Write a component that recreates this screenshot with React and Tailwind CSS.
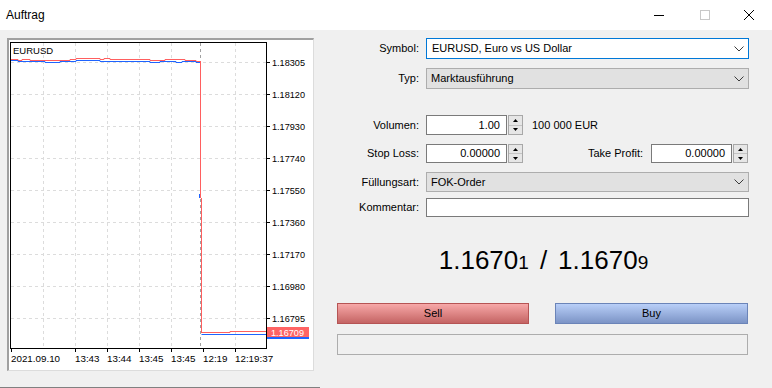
import React from "react";

const F = { fontFamily: '"Liberation Sans", Arial, sans-serif' };

function Chevron() {
  return (
    <svg width="10" height="6" viewBox="0 0 10 6" className="shrink-0">
      <polyline points="0.5,0.5 5,5 9.5,0.5" fill="none" stroke="#3c3c3c" strokeWidth="1" />
    </svg>
  );
}

function Spinner() {
  return (
    <div className="w-[15px] h-full shrink-0 border border-[#a8a8a8] bg-[#e6e6e6] flex flex-col">
      <div className="flex-1 flex items-center justify-center border-b border-[#c4c4c4]">
        <svg width="5" height="3" viewBox="0 0 5 3"><polygon points="0,3 2.5,0 5,3" fill="#000" /></svg>
      </div>
      <div className="flex-1 flex items-center justify-center">
        <svg width="5" height="3" viewBox="0 0 5 3"><polygon points="0,0 2.5,3 5,0" fill="#000" /></svg>
      </div>
    </div>
  );
}

function Chart() {
  const prices = ["1.18305", "1.18120", "1.17930", "1.17740", "1.17550", "1.17360", "1.17170", "1.16980", "1.16795"];
  const ys = [62, 94, 126, 158, 190, 222, 254, 286, 318];
  const vx = [43, 75, 107, 139, 171, 235];
  const times = [[11, "2021.09.10"], [75, "13:43"], [107, "13:44"], [139, "13:45"], [171, "13:45"], [203, "12:19"], [235, "12:19:37"]];
  const red = "11,59.5 18,59.5 18,60.5 22,60.5 22,59.5 30,59.5 30,60.5 70,60.5 70,59.5 76,59.5 76,58.5 100,58.5 100,59.5 104,59.5 104,58.5 110,58.5 110,59.5 150,59.5 150,60.5 165,60.5 165,59.5 185,59.5 185,60.5 196,60.5 196,61.5 200.5,61.5";
  const blue = "11,60.5 18,60.5 18,61.5 45,61.5 45,62.5 60,62.5 60,61.5 76,61.5 76,60.5 100,60.5 100,61.5 150,61.5 150,62.5 160,62.5 160,61.5 176,61.5 176,62.5 182,62.5 182,61.5 196,61.5 196,62.5 200,62.5";
  return (
    <svg width="304" height="330" viewBox="9 40 304 330" style={F}>
      <rect x="9" y="40" width="304" height="330" fill="#fff" />
      {ys.map((y) => (
        <line key={"h" + y} x1="11" x2="266" y1={y + 0.5} y2={y + 0.5} stroke="#dcdcdc" strokeDasharray="3 3" />
      ))}
      {vx.map((x) => (
        <line key={"v" + x} x1={x + 0.5} x2={x + 0.5} y1="43" y2="348" stroke="#dcdcdc" strokeDasharray="3 3" />
      ))}
      <line x1="200.5" x2="200.5" y1="43" y2="348" stroke="#a0a0a0" strokeDasharray="3 3" />
      <polyline points={red} fill="none" stroke="#ff5f5f" strokeWidth="1" />
      <polyline points={blue} fill="none" stroke="#1e64ff" strokeWidth="1" />
      <line x1="200.5" x2="200.5" y1="61" y2="198" stroke="#ff5f5f" />
      <line x1="199.5" x2="199.5" y1="194" y2="198" stroke="#1e64ff" />
      <line x1="201.5" x2="201.5" y1="198" y2="333" stroke="#ff5f5f" />
      <polyline points="201.5,332.5 230,332.5 230,331.5 266,331.5" fill="none" stroke="#ff5f5f" />
      <polyline points="201.5,334.5 266,334.5" fill="none" stroke="#1e64ff" />
      <rect x="10.5" y="42.5" width="256" height="306" fill="none" stroke="#000" />
      <text x="13" y="54" fontSize="9.5" fill="#000">EURUSD</text>
      {ys.map((y, i) => (
        <g key={"p" + y}>
          <line x1="266" x2="270" y1={y + 0.5} y2={y + 0.5} stroke="#000" />
          <text x="272" y={y + 4} fontSize="9.8" fill="#000" textLength="33" lengthAdjust="spacingAndGlyphs">{prices[i]}</text>
        </g>
      ))}
      {times.map(([x, t], i) => (
        <g key={"t" + i}>
          <line x1={x + 0.5} x2={x + 0.5} y1="348" y2="352" stroke="#000" />
          <text x={x} y="362" fontSize="9.8" fill="#000">{t}</text>
        </g>
      ))}
      <rect x="267" y="327" width="42" height="10" fill="#ff6464" />
      <text x="271" y="335.5" fontSize="9.8" fill="#fff" textLength="33" lengthAdjust="spacingAndGlyphs">1.16709</text>
      <rect x="267" y="337" width="42" height="2" fill="#1e64ff" />
    </svg>
  );
}

export default function App() {
  return (
    <div className="w-[772px] h-[388px] bg-[#f0f0f0] flex flex-col overflow-hidden text-[11px] text-black" style={F}>
      <div className="h-[30px] bg-white flex items-center shrink-0">
        <div className="pl-[6px] text-[12px] flex-1">Auftrag</div>
        <div className="flex items-center h-full">
          <div className="w-[46px] h-full flex items-center justify-center">
            <svg width="10" height="10" viewBox="0 0 10 10"><line x1="0" x2="10" y1="5.5" y2="5.5" stroke="#000" /></svg>
          </div>
          <div className="w-[46px] h-full flex items-center justify-center">
            <svg width="10" height="10" viewBox="0 0 10 10"><rect x="0.5" y="0.5" width="9" height="9" fill="none" stroke="#c8c8c8" /></svg>
          </div>
          <div className="w-[44px] h-full flex items-center justify-center pr-[2px]">
            <svg width="10" height="10" viewBox="0 0 10 10"><path d="M0 0 L10 10 M10 0 L0 10" stroke="#000" strokeWidth="1" /></svg>
          </div>
        </div>
      </div>

      <div className="flex-1 flex relative">
        <div className="ml-[7px] mt-[8px] w-[307px] h-[333px] bg-white border-l-2 border-t-2 border-l-[#a0a0a0] border-t-[#a0a0a0] border-r border-b border-r-[#dcdcdc] border-b-[#dcdcdc] shrink-0">
          <Chart />
        </div>

        <div className="flex-1 pl-[23px] pr-[23px] flex flex-col">
          <div className="mt-[8px] h-[21px] flex items-center">
            <div className="w-[82px] text-right shrink-0">Symbol:</div>
            <div className="ml-[7px] flex-1 h-full border border-[#0078d7] bg-white flex items-center pl-[5px] pr-[4px]">
              <span className="flex-1">EURUSD, Euro vs US Dollar</span>
              <Chevron />
            </div>
          </div>

          <div className="mt-[9px] h-[21px] flex items-center">
            <div className="w-[82px] text-right shrink-0">Typ:</div>
            <div className="ml-[7px] flex-1 h-full border border-[#adadad] bg-[#e1e1e1] flex items-center pl-[4px] pr-[4px]">
              <span className="flex-1">Marktausführung</span>
              <Chevron />
            </div>
          </div>

          <div className="mt-[26px] h-[20px] flex items-center">
            <div className="w-[82px] text-right shrink-0">Volumen:</div>
            <div className="ml-[7px] w-[81px] h-full border border-[#7a7a7a] bg-white flex items-center justify-end pr-[6px] shrink-0">1.00</div>
            <div className="ml-[1px] h-full flex"><Spinner /></div>
            <div className="ml-[9px]">100 000 EUR</div>
          </div>

          <div className="mt-[9px] h-[19px] flex items-center">
            <div className="w-[82px] text-right shrink-0">Stop Loss:</div>
            <div className="ml-[7px] w-[81px] h-full border border-[#7a7a7a] bg-white flex items-center justify-end pr-[6px] shrink-0">0.00000</div>
            <div className="ml-[1px] h-full flex"><Spinner /></div>
            <div className="flex-1 text-right">Take Profit:</div>
            <div className="ml-[8px] w-[81px] h-full border border-[#7a7a7a] bg-white flex items-center justify-end pr-[6px] shrink-0">0.00000</div>
            <div className="ml-[1px] mr-[1px] h-full flex"><Spinner /></div>
          </div>

          <div className="mt-[9px] h-[20px] flex items-center">
            <div className="w-[82px] text-right shrink-0">Füllungsart:</div>
            <div className="ml-[7px] flex-1 h-full border border-[#adadad] bg-[#e1e1e1] flex items-center pl-[4px] pr-[4px]">
              <span className="flex-1">FOK-Order</span>
              <Chevron />
            </div>
          </div>

          <div className="mt-[6px] h-[19px] flex items-center">
            <div className="w-[82px] text-right shrink-0">Kommentar:</div>
            <div className="ml-[7px] flex-1 h-full border border-[#7a7a7a] bg-white"></div>
          </div>

          <div className="mt-[25px] h-[36px] leading-[36px] flex justify-center text-[26px] whitespace-pre pl-[1px]">
            <span>1.1670<span className="text-[19px]">1</span></span>
            <span className="mx-[11px]">/</span>
            <span>1.1670<span className="text-[19px]">9</span></span>
          </div>

          <div className="mt-[25px] h-[21px] flex justify-between pr-[1px]">
            <div className="w-[192px] h-full border border-[#b55454] bg-gradient-to-b from-[#f7a8a8] to-[#c46464] flex items-center justify-center">Sell</div>
            <div className="w-[193px] h-full border border-[#6b84b8] bg-gradient-to-b from-[#b9cff8] to-[#7c94c6] flex items-center justify-center">Buy</div>
          </div>

          <div className="mt-[10px] h-[21px] mr-[1px] border border-[#adadad] bg-[#f0f0f0]"></div>
        </div>

        <div className="absolute left-0 top-[357px] w-[320px] h-px bg-[#808080]"></div>
      </div>
    </div>
  );
}
